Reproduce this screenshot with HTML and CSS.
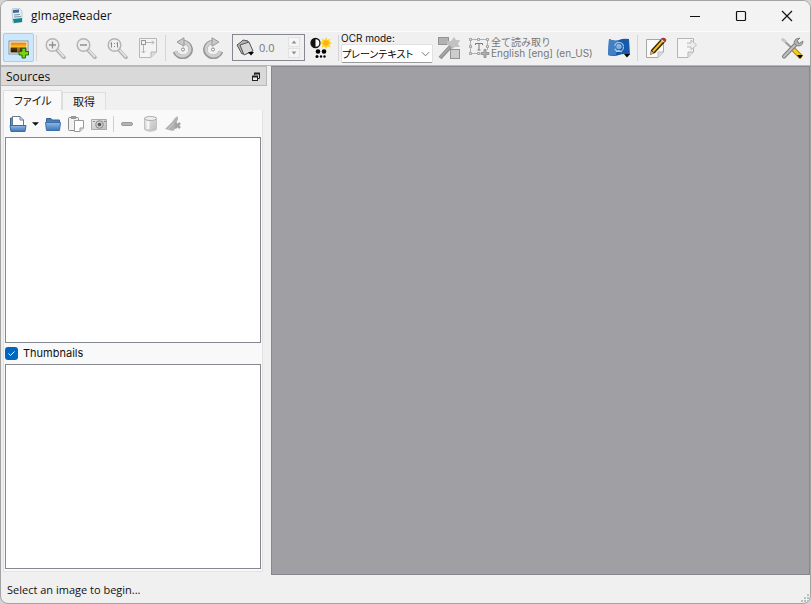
FILE: index.html
```html
<!DOCTYPE html>
<html lang="ja">
<head>
<meta charset="utf-8">
<title>gImageReader</title>
<link rel="stylesheet" href="styles.css">
</head>
<body>
<svg class="defs" aria-hidden="true">
  <defs>
    <linearGradient id="blue" x1="0" y1="0" x2="0" y2="1"><stop offset="0" stop-color="#90b9e4"/><stop offset="1" stop-color="#3d76b4"/></linearGradient>
    <linearGradient id="sunset" x1="0" y1="0" x2="0" y2="1"><stop offset="0" stop-color="#e97a04"/><stop offset=".45" stop-color="#ffc42c"/><stop offset=".55" stop-color="#5a3a08"/><stop offset="1" stop-color="#1d1808"/></linearGradient>
    <linearGradient id="silver" x1="0" y1="0" x2="1" y2="1"><stop offset="0" stop-color="#e8e8e8"/><stop offset="1" stop-color="#bcbcbc"/></linearGradient>
    <g id="lens">
      <path d="M13 13 L20 20.500" stroke="#b0b0b0" stroke-width="3.400" stroke-linecap="round"/>
      <path d="M14 13.500 L19.500 19.500" stroke="#e6e6e6" stroke-width="1.800" stroke-linecap="round"/>
      <circle cx="8.500" cy="8" r="6.300" fill="#eee" stroke="#b4b4b4" stroke-width="1.500"/>
    </g>
    <g id="turn">
      <path d="M3 14.500 A8 7.500 0 1 0 11 5" fill="none" stroke="#989898" stroke-width="4.600"/>
      <path d="M3.500 14.500 A7.500 7 0 1 0 11 5" fill="none" stroke="#d0d0d0" stroke-width="2.800"/>
      <path d="M5 5 L12 .8 V9.200 Z" fill="#cacaca" stroke="#989898"/>
      <circle cx="11" cy="12.500" r="1.500" fill="#fff" stroke="#888"/>
    </g>
  </defs>
</svg>
<div class="window">
  <header class="titlebar">
    <svg class="app-icon" viewBox="0 0 12 16"><path d="M1 1 L8 0 L11 3 V14 L2 15 Z" fill="#e6eef3" stroke="#a9b9c2" stroke-width=".7"/><path d="M2 2 L8 1.500 V4.500 L2 5 Z" fill="#3f6d9b"/><path d="M3 7 L9 6.500 M3 9 L10 8.500" stroke="#7994a8"/><path d="M2 11 L11 10 V14 L3 15 Z" fill="#14848b"/></svg>
    <h1 class="title">gImageReader</h1>
    <div class="caption-buttons">
      <button aria-label="Minimize"><svg viewBox="0 0 12 12"><path d="M1 6.500 H11" stroke="#111"/></svg></button>
      <button aria-label="Maximize"><svg viewBox="0 0 12 12"><rect x="1.500" y="1.500" width="9" height="9" rx="1" fill="none" stroke="#111" stroke-width="1.200"/></svg></button>
      <button aria-label="Close"><svg viewBox="0 0 12 12"><path d="M1 1 L11 11 M11 1 L1 11" stroke="#111" stroke-width="1.200"/></svg></button>
    </div>
  </header>

  <div class="toolbar" role="toolbar">
    <button class="tool active" aria-label="Sources"><svg class="icon" viewBox="0 0 22 22"><rect x="1" y="4" width="19" height="13" fill="#fff" stroke="#8b8b83"/><rect x="2.500" y="5.500" width="16" height="10" fill="url(#sunset)"/><path d="M9 10 H12 V15 H9 Z" fill="#d69a20" opacity=".6"/><path d="M14 11.500 h3.500 v3 h3 v3.500 h-3 v3 h-3.500 v-3 h-3 v-3.500 h3 Z" fill="#78d21c" stroke="#2e6d08"/></svg></button>
    <span class="sep"></span>
    <button class="tool" aria-label="Zoom in"><svg class="icon" viewBox="0 0 22 22"><use href="#lens"/><path d="M5 8 H12 M8.500 4.500 V11.500" stroke="#8f8f8f" stroke-width="1.300"/></svg></button>
    <button class="tool" aria-label="Zoom out"><svg class="icon" viewBox="0 0 22 22"><use href="#lens"/><path d="M5 8 H12" stroke="#8f8f8f" stroke-width="1.300"/></svg></button>
    <button class="tool" aria-label="Original size"><svg class="icon" viewBox="0 0 22 22"><use href="#lens"/><path d="M4.500 6.500 L5.500 5.500 V10.500 M10.500 6.500 L11.500 5.500 V10.500 M8.500 6 V7 M8.500 9 V10" fill="none" stroke="#888"/></svg></button>
    <button class="tool" aria-label="Best fit"><svg class="icon" viewBox="0 0 22 22"><path d="M2.500 1.500 H19.500 V15 L14 20.500 H2.500 Z" fill="#f4f4f4" stroke="#b7b7b7"/><path d="M19 15 H14 V20" fill="#ddd" stroke="#b7b7b7"/><rect x="4.500" y="3.500" width="4" height="4" fill="none" stroke="#999"/><path d="M9 5.500 H17 M6.500 8 V16 M15 3.500 L17 5.500 L15 7.500 M4.500 14 L6.500 16 L8.500 14" fill="none" stroke="#b4b4b4"/></svg></button>
    <span class="sep"></span>
    <button class="tool turn" aria-label="Rotate left"><svg class="icon" viewBox="0 0 22 22"><use href="#turn"/></svg></button>
    <button class="tool turn" aria-label="Rotate right"><svg class="icon" viewBox="0 0 22 22"><g transform="translate(22 0) scale(-1 1)"><use href="#turn"/></g></svg></button>
    <div class="spin">
      <svg class="spin-icon" viewBox="0 0 20 18"><path d="M1 6 L5 3 L7 1 L12 2 L14 11 L6 15 Z" fill="#b5b5b5" stroke="#555"/><path d="M4 6 L13 3 L17 12 L8 16 Z" fill="#d9d9d9" stroke="#555"/><path d="M12 13 H18 L15 16.500 Z" fill="#000"/></svg>
      <input class="spin-value" type="text" value="0.0" aria-label="Rotation">
      <div class="spin-arrows">
        <button aria-label="Increase"><svg viewBox="0 0 10 10"><path d="M2 7 L5 3 L8 7 Z" fill="#909090"/></svg></button>
        <button aria-label="Decrease"><svg viewBox="0 0 10 10"><path d="M2 3 L5 7 L8 3 Z" fill="#909090"/></svg></button>
      </div>
    </div>
    <button class="tool" aria-label="Image controls"><svg class="icon" viewBox="0 0 22 22"><circle cx="5.500" cy="6" r="4.500" fill="#f8f8f8" stroke="#111" stroke-width="1.300"/><path d="M5.500 1.500 A4.500 4.500 0 0 0 5.500 10.500 Z" fill="#111"/><path d="M16 0 L17.500 3 L20.500 1.500 L19.500 4.500 L22 6 L19.500 7.500 L20.500 10.500 L17.500 9.500 L16 12 L14.500 9.500 L11.500 10.500 L12.500 7.500 L10 6 L12.500 4.500 L11.500 1.500 L14.500 3 Z" fill="#ffd814"/><circle cx="16" cy="6" r="2.800" fill="#ffad2a"/><circle cx="8" cy="14.500" r="2.300"/><circle cx="14" cy="14.500" r="2.300"/><circle cx="7" cy="19.500" r="1.500"/><circle cx="11" cy="19.500" r="1.200"/><circle cx="14.500" cy="19.500" r="1.200"/></svg></button>
    <span class="sep near"></span>
    <div class="mode">
      <label for="mode">OCR mode:</label>
      <div class="select-box">
        <select id="mode"><option>プレーンテキスト</option></select>
        <svg class="chevron" viewBox="0 0 10 6"><path d="M1 1 L5 5 L9 1" fill="none" stroke="#666"/></svg>
      </div>
    </div>
    <button class="tool wand" aria-label="Autodetect layout"><svg class="icon big" viewBox="0 0 24 24"><rect x="1.500" y="1.500" width="10" height="7" fill="#b2b2b2" stroke="#929292"/><rect x="13.500" y="13.500" width="9" height="9" fill="#ccc" stroke="#929292"/><path d="M3 22 L15 9" stroke="#909090" stroke-width="4"/><path d="M3.500 21 L14 10" stroke="#aaa" stroke-width="1.500"/><path d="M10 5 L14 5 L17 1 L19 4 L23 4 L21 8 L23 11 L18 11 L15 13 L14 10 L10 9 Z" fill="#c2c2c2"/></svg></button>
    <button class="recognize">
      <svg class="icon big" viewBox="0 0 24 24"><path d="M3.500 3.500 H20.500 V14 M3.500 3.500 V17.500 H13" fill="none" stroke="#b0b0b0"/><path d="M2.500 2.500 h2 v2 h-2 z M10.500 2.500 h2 v2 h-2 z M19.500 2.500 h2 v2 h-2 z M2.500 9.500 h2 v2 h-2 z M19.500 9.500 h2 v2 h-2 z M2.500 16.500 h2 v2 h-2 z M10.500 16.500 h2 v2 h-2 z" fill="#eee" stroke="#a0a0a0"/><path d="M8.500 9 V7.500 H15.500 V9 M12 7.500 V14 M10.500 14 H13.500" fill="none" stroke="#777"/><path d="M17 13.500 h2 v3 h3 v2 h-3 v3 h-2 v-3 h-3 v-2 h3 Z" fill="#b0b0b0" stroke="#959595"/></svg>
      <span class="recognize-text"><span>全て読み取り</span><span>English [eng] (en_US)</span></span>
    </button>
    <button class="tool flag" aria-label="Language"><svg class="icon big" viewBox="0 0 24 24"><path d="M2 3 Q8 6 12 4 T22 3 L23 19 Q17 17 12 19 T1 19 Z" fill="#175aaa"/><path d="M2 3 Q8 6 12 4 L9 19 Q5 20 1 19 Z" fill="#437fc2"/><circle cx="12" cy="11" r="4.500" fill="none" stroke="#a9ccec" stroke-width="1.200" stroke-dasharray="12 3"/><circle cx="12" cy="10.500" r="2.500" fill="#a4c6e7"/><path d="M12 7 V14 M9 11 H15" stroke="#659bd2" stroke-width=".7"/><path d="M9 15.500 L12 14.500 L15 16" fill="none" stroke="#bfd9f0"/><path d="M17 18 H23 L20 21.500 Z" fill="#000"/></svg></button>
    <span class="sep"></span>
    <button class="tool" aria-label="Output pane"><svg class="icon" viewBox="0 0 22 22"><path d="M1.500 2.500 H18.500 V15 L13 20.500 H1.500 Z" fill="#fafafa" stroke="#a6a6a6"/><path d="M18 15 H13 V20" fill="#ddd" stroke="#bbb"/><path d="M5 18 L6 13 L17 1 L21 4 L10 16 Z" fill="#312308"/><path d="M8 14.500 L17.500 4" stroke="#f2ba23" stroke-width="2"/><path d="M16.500 2.500 L19.500 5" stroke="#eee" stroke-width="1.500"/><path d="M17 1 Q20 0 21.500 3 L20 5 L16.500 2 Z" fill="#ad3428"/><path d="M5 18 L6 14 L9 16 Z" fill="#d3ad72"/></svg></button>
    <button class="tool" aria-label="Export"><svg class="icon" viewBox="0 0 22 22"><path d="M1.500 1.500 H17.500 V15 L12 20.500 H1.500 Z" fill="#f6f6f6" stroke="#b5b5b5"/><path d="M17 15 H12 V20" fill="#e0e0e0" stroke="#b5b5b5"/><path d="M11 6 H15 V3 L20.500 8 L15 13 V10 H11" fill="#ededed" stroke="#bbb"/></svg></button>
    <button class="tool settings" aria-label="Settings"><svg class="icon big" viewBox="0 0 24 24"><path d="M2 3 L14 14" stroke="#999" stroke-width="2"/><path d="M2 3 L6 6" stroke="#c9c9c9" stroke-width="3"/><path d="M13 13 L20 20" stroke="#b28908" stroke-width="5" stroke-linecap="round"/><path d="M13 13 L20 20" stroke="#f5ca23" stroke-width="3" stroke-linecap="round"/><path d="M4 20.500 L17 7" stroke="#777" stroke-width="4" stroke-linecap="round"/><path d="M4 20.500 L17 7" stroke="#c0c0c0" stroke-width="2.200" stroke-linecap="round"/><path d="M20 2 L17 5 L19 7.500 L23 5 Q23 10 18 10 Q14 9 14 6 Q15 2 20 2 Z" fill="#b2b2b2" stroke="#777" stroke-width=".8"/><path d="M17 19 H23 L20 22.500 Z" fill="#000"/></svg></button>
  </div>

  <main class="workspace">
    <aside class="dock">
      <div class="dock-title"><h2>Sources</h2><button aria-label="Float"><svg viewBox="0 0 10 10"><path d="M3.500 3 V1.500 H8.500 V6.500 H7" fill="none" stroke="#222"/><path d="M3 1.500 H9" stroke="#222" stroke-width="2"/><rect x="1.500" y="4.500" width="5" height="4" fill="#eee" stroke="#222"/><path d="M1 4.500 H7" stroke="#222" stroke-width="2"/></svg></button></div>
      <div class="tabs" role="tablist"><button class="tab selected" role="tab" aria-selected="true">ファイル</button><button class="tab" role="tab" aria-selected="false">取得</button></div>
      <div class="panel">
        <div class="file-tools">
          <button class="open" aria-label="Add images"><svg viewBox="0 0 18 18"><path d="M1.500 3 H7 V15 H1.500 Z" fill="#5d8fc5" stroke="#3a689c"/><path d="M3.500 1.500 H11 L14.500 5 V13 H3.500 Z" fill="#fff" stroke="#68798b"/><path d="M11 1.500 V5 H14.500" fill="none" stroke="#68798b"/><path d="M1 10.500 H17 L16 16.500 H2 Z" fill="url(#blue)" stroke="#3a6da8"/></svg></button>
          <button class="drop" aria-label="Recent"><svg viewBox="0 0 8 18"><path d="M0 7 H8 L4 11 Z" fill="#111"/></svg></button>
          <button aria-label="Add folder"><svg viewBox="0 0 18 18"><path d="M2.500 3.500 H7 L8 5 H15.500 V12 H2.500 Z" fill="#497eb8" stroke="#34639a"/><path d="M1.500 7.500 H16.500 L15.500 15.500 H2.500 Z" fill="url(#blue)" stroke="#3d70a9"/></svg></button>
          <button aria-label="Paste"><svg viewBox="0 0 18 18"><rect x="1.500" y="2.500" width="10" height="13" rx="1" fill="#f2f2f2" stroke="#8a8a8a"/><rect x="4" y="1" width="5" height="3" fill="#999"/><path d="M7.500 5.500 H16.500 V13 L13 16.500 H7.500 Z" fill="#fff" stroke="#999"/><path d="M16.500 13 H13 V16.500" fill="#ddd" stroke="#999"/></svg></button>
          <button aria-label="Screenshot"><svg viewBox="0 0 18 18"><path d="M1.500 4.500 H16.500 V14.500 H1.500 Z" fill="url(#silver)" stroke="#aaa"/><circle cx="9.500" cy="9.500" r="3.800" fill="#ccc" stroke="#888"/><circle cx="9.500" cy="9.500" r="1.800" fill="#555"/><path d="M3 6.500 H5 M14 6.500 H16" stroke="#888"/></svg></button>
          <span class="file-sep"></span>
          <button aria-label="Remove"><svg viewBox="0 0 18 18"><rect x="2.500" y="7.500" width="11" height="3" rx="1.500" fill="#b5b5b5" stroke="#999"/></svg></button>
          <button aria-label="Delete"><svg viewBox="0 0 18 18"><path d="M2.500 3 V14.500 Q8 18 14.500 14.500 V3 Z" fill="url(#silver)" stroke="#c4c4c4"/><path d="M6 6 V14" stroke="#f5f5f5" stroke-width="3"/><ellipse cx="8.500" cy="3.500" rx="6" ry="2" fill="#eee" stroke="#aaa"/></svg></button>
          <button aria-label="Clear"><svg viewBox="0 0 18 18"><path d="M0 14 L7 7 L10 3 L12.500 1 L13 4 L11.500 8 L13 11 L8 16 Z" fill="#b2b2b2"/><path d="M3 14 L9 8" stroke="#ccc"/><path d="M10 8 L15 13 M15 8 L10 13" stroke="#a2a2a2" stroke-width="2.500"/></svg></button>
        </div>
        <div class="list"></div>
        <label class="thumbs"><input type="checkbox" checked><span>Thumbnails</span></label>
        <div class="list"></div>
      </div>
    </aside>
    <section class="canvas" aria-label="Image"></section>
  </main>

  <footer class="status"><span>Select an image to begin...</span><svg class="grip" viewBox="0 0 10 10"><path d="M7 1 h2 v2 h-2 z M4 4 h2 v2 h-2 z M7 4 h2 v2 h-2 z M1 7 h2 v2 h-2 z M4 7 h2 v2 h-2 z M7 7 h2 v2 h-2 z" fill="#bdbdbd"/></svg></footer>
</div>
</body>
</html>
```
FILE: styles.css
```css
* { box-sizing: border-box; }
body { margin: 0; background: #d4d4d4; color: #111; font: 12px/16px "Open Sans", "Noto Sans CJK JP", sans-serif; }
button { padding: 0; border: 0; background: none; color: inherit; font: inherit; }
svg { display: block; flex: none; }
h1, h2 { margin: 0; font-size: 12px; font-weight: 400; }
.defs { position: absolute; width: 0; height: 0; }

.window { display: flex; flex-direction: column; height: 100vh; border: 1px solid #a3a3a3; border-radius: 8px; background: #f0f0f0; overflow: hidden; }

.titlebar { display: flex; align-items: center; height: 30px; padding-left: 10px; gap: 8px; background: #f3f3f3; }
.app-icon { width: 12px; height: 16px; }
.caption-buttons { display: flex; margin-left: auto; }
.caption-buttons button { display: grid; place-items: center; width: 46px; height: 30px; }
.caption-buttons svg { width: 12px; height: 12px; }

.toolbar { display: flex; align-items: center; height: 35px; padding: 0 3px 2px 2px; border-top: 1px solid #fafafa; border-bottom: 1px solid #b8b8b8; }
.tool { display: grid; place-items: center; flex: none; width: 31px; height: 29px; }
.active { border: 1px solid #99d1ff; border-radius: 2px; background: #cce8ff; }
.icon { width: 22px; height: 22px; }
.big { width: 24px; height: 24px; }
.sep { flex: none; width: 1px; height: 26px; margin: 0 2px; background: #d4d4d4; }
.turn { width: 30px; }
.spin { display: flex; align-items: center; flex: none; width: 73px; height: 27px; margin-left: 4px; padding-left: 3px; border: 1px solid #858891; }
.spin-icon { width: 20px; height: 18px; }
.spin-value { width: 28px; height: 20px; margin: 0; padding: 0 0 0 3px; border: 0; background: none; color: #777; font: 11px "Open Sans", sans-serif; }
.spin-arrows { display: flex; flex-direction: column; gap: 1px; margin-left: 4px; }
.spin-arrows button { border: 1px solid #e2e2e2; background: #f5f5f5; }
.spin-arrows svg { width: 10px; height: 8px; }
.near { margin: 0 2px; }
.mode { flex: none; width: 92px; font: 10px/12px Inter, "Noto Sans CJK JP", sans-serif; }
.mode label { display: block; }
.select-box { position: relative; }
select { display: block; width: 100%; height: 19px; margin: 0; padding: 0; appearance: none; border: 1px solid #e0e0e0; border-bottom-color: #999; border-radius: 2px; background: #fff; color: #000; font: 10px "Noto Sans CJK JP", sans-serif; font-feature-settings: "palt"; }
.chevron { position: absolute; right: 3px; top: 7px; width: 9px; height: 6px; pointer-events: none; }
.recognize { display: flex; align-items: center; flex: none; width: 139px; height: 29px; padding-left: 3px; color: #777; text-align: left; }
.recognize-text { display: flex; flex-direction: column; font: 10px/11px Inter, "Noto Sans CJK JP", sans-serif; white-space: nowrap; }
.flag { width: 32px; }
.settings { margin-left: auto; }

.workspace { display: flex; flex: 1; gap: 4px; min-height: 0; }
.dock { display: flex; flex-direction: column; width: 266px; }
.dock-title { display: flex; align-items: center; justify-content: space-between; height: 20px; padding: 2px 5px 0; border: 1px solid #b9b9b9; border-left: 0; background: #d9d9d9; }
.dock-title svg { width: 10px; height: 10px; }
.tabs { display: flex; align-items: flex-end; height: 24px; padding-left: 2px; font-size: 11px; font-feature-settings: "palt"; }
.tab { width: 44px; height: 18px; border: 1px solid #dedede; border-bottom: 0; background: #f3f3f3; }
.selected { width: 59px; height: 20px; background: #f9f9f9; }
.panel { display: flex; flex: 1; flex-direction: column; margin: 0 4px 3px 2px; padding: 0 1px 2px; border: 1px solid #e2e2e2; border-top: 0; background: #f9f9f9; }
.file-tools { display: flex; align-items: center; gap: 5px; height: 27px; padding-left: 4px; }
.file-tools svg { width: 18px; height: 18px; }
.file-tools .drop svg { width: 7px; }
.file-sep { width: 1px; height: 16px; background: #cfcfcf; }
.list { flex: 1; border: 1px solid #858891; background: #fff; }
.thumbs { display: flex; align-items: center; gap: 5px; height: 21px; font: 11px/14px Inter, sans-serif; }
.thumbs input { appearance: none; width: 13px; height: 13px; margin: 0; border-radius: 3px; background: #0067c0 url("data:image/svg+xml,%3Csvg xmlns='http://www.w3.org/2000/svg' viewBox='0 0 13 13'%3E%3Cpath d='M3.500 6.500 L5.500 8.500 L9.500 4.500' fill='none' stroke='white'/%3E%3C/svg%3E") center / 13px; }
.canvas { flex: 1; border: 1px solid #858891; background: #a0a0a4; }

.status { display: flex; align-items: center; height: 28px; padding: 2px 0 0 6px; font-size: 11px; }
.grip { align-self: flex-end; width: 10px; height: 10px; margin-left: auto; }
```
